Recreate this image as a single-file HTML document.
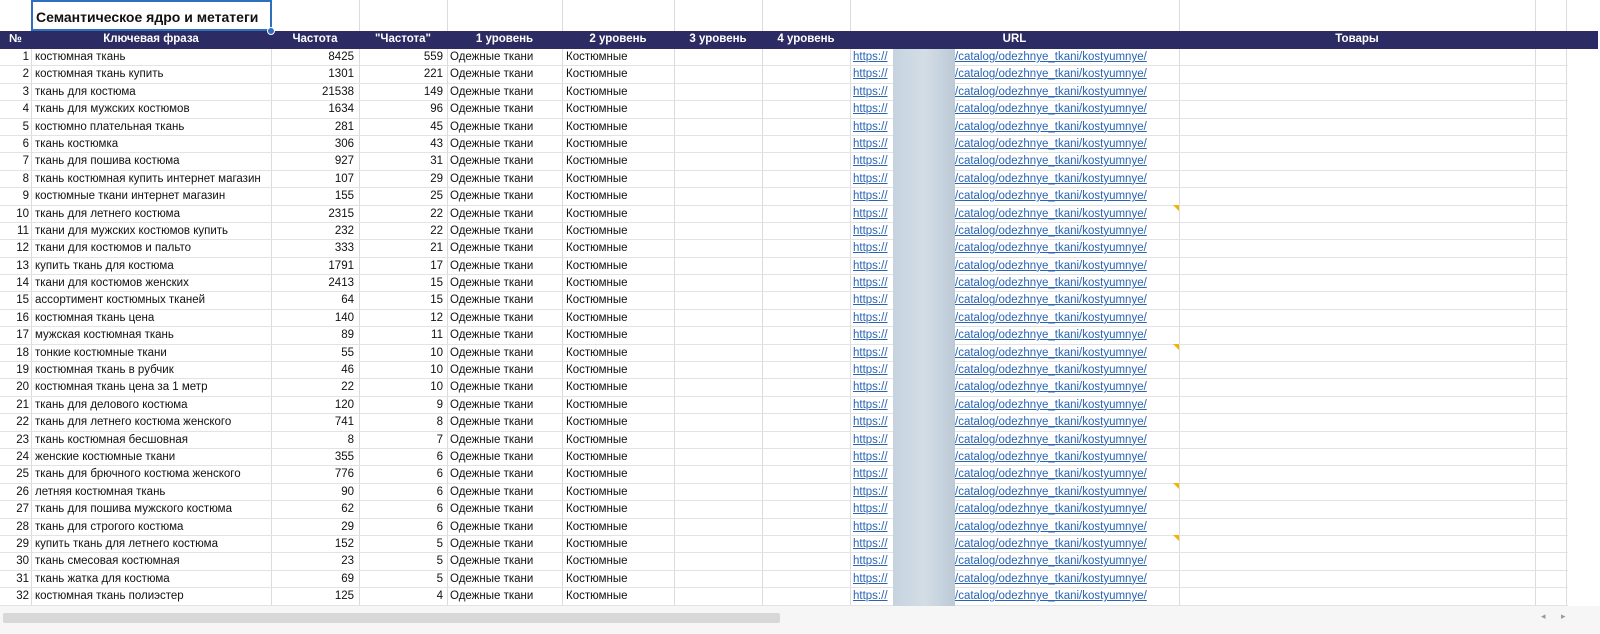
<!DOCTYPE html>
<html><head><meta charset="utf-8"><style>
*{margin:0;padding:0;box-sizing:border-box}
body{width:1600px;height:634px;overflow:hidden;background:#fff;font-family:"Liberation Sans","DejaVu Sans",sans-serif;font-size:11.5px;color:#111;position:relative}
.vl{position:absolute;top:0;height:606px;width:1px;background:#dcdcdc}
.title{position:absolute;left:31px;top:0;width:241px;height:31px;border:2px solid #2f6fc0;font-weight:bold;font-size:14px;padding:7px 0 0 3px;background:#fff;z-index:3;white-space:nowrap;overflow:hidden}
.handle{position:absolute;left:267px;top:27px;width:8px;height:8px;border-radius:50%;background:#2f6fc0;border:1px solid #fff;z-index:4}
.hdr{position:absolute;left:0;top:31px;width:1598px;height:18px;background:#2c2b63;color:#fff;font-weight:bold;z-index:2}
.hdr span{position:absolute;top:2px;text-align:center}
.rows{position:absolute;left:0;top:49px;width:1568px}
.r{height:17.4px;border-bottom:1px solid #e3e3e3;position:relative;line-height:16.4px;white-space:nowrap}
.r span{position:absolute;top:0}
.n{left:0;width:29px;text-align:right}
.p{left:35px}
.f{left:271px;width:83px;text-align:right}
.q{left:359px;width:84px;text-align:right}
.l1{left:450px}.l2{left:566px}
.u,.v{color:#2a64b4;text-decoration:underline}
.u{left:853px}.v{left:955px}
.blur{position:absolute;left:893px;top:49px;width:62px;height:557px;background:linear-gradient(90deg,#c6d3de,#d3dde6 50%,#bccad6);z-index:1}
.tri{position:absolute;left:1173px;width:0;height:0;border-top:6px solid #f2b400;border-left:6px solid transparent;z-index:2}
.sb{position:absolute;left:0;top:606px;width:1600px;height:28px;background:#f6f6f6;z-index:5}
.thumb{position:absolute;left:3px;top:7px;width:777px;height:10px;background:#d8d8d8;border-radius:2px}
</style></head><body>
<div class="vl" style="left:31px"></div><div class="vl" style="left:271px"></div><div class="vl" style="left:359px"></div><div class="vl" style="left:447px"></div><div class="vl" style="left:562px"></div><div class="vl" style="left:674px"></div><div class="vl" style="left:762px"></div><div class="vl" style="left:850px"></div><div class="vl" style="left:1179px"></div><div class="vl" style="left:1535px"></div><div class="vl" style="left:1566px"></div>
<div class="title">Семантическое ядро и метатеги</div><div class="handle"></div>
<div class="hdr"><span style="left:0;width:31px">№</span><span style="left:31px;width:240px">Ключевая фраза</span><span style="left:271px;width:88px">Частота</span><span style="left:359px;width:88px">"Частота"</span><span style="left:447px;width:115px">1 уровень</span><span style="left:562px;width:112px">2 уровень</span><span style="left:674px;width:88px">3 уровень</span><span style="left:762px;width:88px">4 уровень</span><span style="left:850px;width:329px">URL</span><span style="left:1179px;width:356px">Товары</span></div>
<div class="blur"></div>
<div class="tri" style="top:205px"></div><div class="tri" style="top:344px"></div><div class="tri" style="top:483px"></div><div class="tri" style="top:535px"></div>
<div class="rows">
<div class="r"><span class="n">1</span><span class="p">костюмная ткань</span><span class="f">8425</span><span class="q">559</span><span class="l1">Одежные ткани</span><span class="l2">Костюмные</span><span class="u">https://</span><span class="v">/catalog/odezhnye_tkani/kostyumnye/</span></div>
<div class="r"><span class="n">2</span><span class="p">костюмная ткань купить</span><span class="f">1301</span><span class="q">221</span><span class="l1">Одежные ткани</span><span class="l2">Костюмные</span><span class="u">https://</span><span class="v">/catalog/odezhnye_tkani/kostyumnye/</span></div>
<div class="r"><span class="n">3</span><span class="p">ткань для костюма</span><span class="f">21538</span><span class="q">149</span><span class="l1">Одежные ткани</span><span class="l2">Костюмные</span><span class="u">https://</span><span class="v">/catalog/odezhnye_tkani/kostyumnye/</span></div>
<div class="r"><span class="n">4</span><span class="p">ткань для мужских костюмов</span><span class="f">1634</span><span class="q">96</span><span class="l1">Одежные ткани</span><span class="l2">Костюмные</span><span class="u">https://</span><span class="v">/catalog/odezhnye_tkani/kostyumnye/</span></div>
<div class="r"><span class="n">5</span><span class="p">костюмно плательная ткань</span><span class="f">281</span><span class="q">45</span><span class="l1">Одежные ткани</span><span class="l2">Костюмные</span><span class="u">https://</span><span class="v">/catalog/odezhnye_tkani/kostyumnye/</span></div>
<div class="r"><span class="n">6</span><span class="p">ткань костюмка</span><span class="f">306</span><span class="q">43</span><span class="l1">Одежные ткани</span><span class="l2">Костюмные</span><span class="u">https://</span><span class="v">/catalog/odezhnye_tkani/kostyumnye/</span></div>
<div class="r"><span class="n">7</span><span class="p">ткань для пошива костюма</span><span class="f">927</span><span class="q">31</span><span class="l1">Одежные ткани</span><span class="l2">Костюмные</span><span class="u">https://</span><span class="v">/catalog/odezhnye_tkani/kostyumnye/</span></div>
<div class="r"><span class="n">8</span><span class="p">ткань костюмная купить интернет магазин</span><span class="f">107</span><span class="q">29</span><span class="l1">Одежные ткани</span><span class="l2">Костюмные</span><span class="u">https://</span><span class="v">/catalog/odezhnye_tkani/kostyumnye/</span></div>
<div class="r"><span class="n">9</span><span class="p">костюмные ткани интернет магазин</span><span class="f">155</span><span class="q">25</span><span class="l1">Одежные ткани</span><span class="l2">Костюмные</span><span class="u">https://</span><span class="v">/catalog/odezhnye_tkani/kostyumnye/</span></div>
<div class="r"><span class="n">10</span><span class="p">ткань для летнего костюма</span><span class="f">2315</span><span class="q">22</span><span class="l1">Одежные ткани</span><span class="l2">Костюмные</span><span class="u">https://</span><span class="v">/catalog/odezhnye_tkani/kostyumnye/</span></div>
<div class="r"><span class="n">11</span><span class="p">ткани для мужских костюмов купить</span><span class="f">232</span><span class="q">22</span><span class="l1">Одежные ткани</span><span class="l2">Костюмные</span><span class="u">https://</span><span class="v">/catalog/odezhnye_tkani/kostyumnye/</span></div>
<div class="r"><span class="n">12</span><span class="p">ткани для костюмов и пальто</span><span class="f">333</span><span class="q">21</span><span class="l1">Одежные ткани</span><span class="l2">Костюмные</span><span class="u">https://</span><span class="v">/catalog/odezhnye_tkani/kostyumnye/</span></div>
<div class="r"><span class="n">13</span><span class="p">купить ткань для костюма</span><span class="f">1791</span><span class="q">17</span><span class="l1">Одежные ткани</span><span class="l2">Костюмные</span><span class="u">https://</span><span class="v">/catalog/odezhnye_tkani/kostyumnye/</span></div>
<div class="r"><span class="n">14</span><span class="p">ткани для костюмов женских</span><span class="f">2413</span><span class="q">15</span><span class="l1">Одежные ткани</span><span class="l2">Костюмные</span><span class="u">https://</span><span class="v">/catalog/odezhnye_tkani/kostyumnye/</span></div>
<div class="r"><span class="n">15</span><span class="p">ассортимент костюмных тканей</span><span class="f">64</span><span class="q">15</span><span class="l1">Одежные ткани</span><span class="l2">Костюмные</span><span class="u">https://</span><span class="v">/catalog/odezhnye_tkani/kostyumnye/</span></div>
<div class="r"><span class="n">16</span><span class="p">костюмная ткань цена</span><span class="f">140</span><span class="q">12</span><span class="l1">Одежные ткани</span><span class="l2">Костюмные</span><span class="u">https://</span><span class="v">/catalog/odezhnye_tkani/kostyumnye/</span></div>
<div class="r"><span class="n">17</span><span class="p">мужская костюмная ткань</span><span class="f">89</span><span class="q">11</span><span class="l1">Одежные ткани</span><span class="l2">Костюмные</span><span class="u">https://</span><span class="v">/catalog/odezhnye_tkani/kostyumnye/</span></div>
<div class="r"><span class="n">18</span><span class="p">тонкие костюмные ткани</span><span class="f">55</span><span class="q">10</span><span class="l1">Одежные ткани</span><span class="l2">Костюмные</span><span class="u">https://</span><span class="v">/catalog/odezhnye_tkani/kostyumnye/</span></div>
<div class="r"><span class="n">19</span><span class="p">костюмная ткань в рубчик</span><span class="f">46</span><span class="q">10</span><span class="l1">Одежные ткани</span><span class="l2">Костюмные</span><span class="u">https://</span><span class="v">/catalog/odezhnye_tkani/kostyumnye/</span></div>
<div class="r"><span class="n">20</span><span class="p">костюмная ткань цена за 1 метр</span><span class="f">22</span><span class="q">10</span><span class="l1">Одежные ткани</span><span class="l2">Костюмные</span><span class="u">https://</span><span class="v">/catalog/odezhnye_tkani/kostyumnye/</span></div>
<div class="r"><span class="n">21</span><span class="p">ткань для делового костюма</span><span class="f">120</span><span class="q">9</span><span class="l1">Одежные ткани</span><span class="l2">Костюмные</span><span class="u">https://</span><span class="v">/catalog/odezhnye_tkani/kostyumnye/</span></div>
<div class="r"><span class="n">22</span><span class="p">ткань для летнего костюма женского</span><span class="f">741</span><span class="q">8</span><span class="l1">Одежные ткани</span><span class="l2">Костюмные</span><span class="u">https://</span><span class="v">/catalog/odezhnye_tkani/kostyumnye/</span></div>
<div class="r"><span class="n">23</span><span class="p">ткань костюмная бесшовная</span><span class="f">8</span><span class="q">7</span><span class="l1">Одежные ткани</span><span class="l2">Костюмные</span><span class="u">https://</span><span class="v">/catalog/odezhnye_tkani/kostyumnye/</span></div>
<div class="r"><span class="n">24</span><span class="p">женские костюмные ткани</span><span class="f">355</span><span class="q">6</span><span class="l1">Одежные ткани</span><span class="l2">Костюмные</span><span class="u">https://</span><span class="v">/catalog/odezhnye_tkani/kostyumnye/</span></div>
<div class="r"><span class="n">25</span><span class="p">ткань для брючного костюма женского</span><span class="f">776</span><span class="q">6</span><span class="l1">Одежные ткани</span><span class="l2">Костюмные</span><span class="u">https://</span><span class="v">/catalog/odezhnye_tkani/kostyumnye/</span></div>
<div class="r"><span class="n">26</span><span class="p">летняя костюмная ткань</span><span class="f">90</span><span class="q">6</span><span class="l1">Одежные ткани</span><span class="l2">Костюмные</span><span class="u">https://</span><span class="v">/catalog/odezhnye_tkani/kostyumnye/</span></div>
<div class="r"><span class="n">27</span><span class="p">ткань для пошива мужского костюма</span><span class="f">62</span><span class="q">6</span><span class="l1">Одежные ткани</span><span class="l2">Костюмные</span><span class="u">https://</span><span class="v">/catalog/odezhnye_tkani/kostyumnye/</span></div>
<div class="r"><span class="n">28</span><span class="p">ткань для строгого костюма</span><span class="f">29</span><span class="q">6</span><span class="l1">Одежные ткани</span><span class="l2">Костюмные</span><span class="u">https://</span><span class="v">/catalog/odezhnye_tkani/kostyumnye/</span></div>
<div class="r"><span class="n">29</span><span class="p">купить ткань для летнего костюма</span><span class="f">152</span><span class="q">5</span><span class="l1">Одежные ткани</span><span class="l2">Костюмные</span><span class="u">https://</span><span class="v">/catalog/odezhnye_tkani/kostyumnye/</span></div>
<div class="r"><span class="n">30</span><span class="p">ткань смесовая костюмная</span><span class="f">23</span><span class="q">5</span><span class="l1">Одежные ткани</span><span class="l2">Костюмные</span><span class="u">https://</span><span class="v">/catalog/odezhnye_tkani/kostyumnye/</span></div>
<div class="r"><span class="n">31</span><span class="p">ткань жатка для костюма</span><span class="f">69</span><span class="q">5</span><span class="l1">Одежные ткани</span><span class="l2">Костюмные</span><span class="u">https://</span><span class="v">/catalog/odezhnye_tkani/kostyumnye/</span></div>
<div class="r"><span class="n">32</span><span class="p">костюмная ткань полиэстер</span><span class="f">125</span><span class="q">4</span><span class="l1">Одежные ткани</span><span class="l2">Костюмные</span><span class="u">https://</span><span class="v">/catalog/odezhnye_tkani/kostyumnye/</span></div>
<div class="r"><span class="n">33</span><span class="p">костюмная ткань</span><span class="f">145</span><span class="q">4</span><span class="l1">Одежные ткани</span><span class="l2">Костюмные</span><span class="u">https://</span><span class="v">/catalog/odezhnye_tkani/kostyumnye/</span></div>
</div>
<div class="sb"><div class="thumb"></div><span style="position:absolute;left:1541px;top:5px;font-size:9px;color:#999">◂</span><span style="position:absolute;left:1561px;top:5px;font-size:9px;color:#999">▸</span></div>
</body></html>
